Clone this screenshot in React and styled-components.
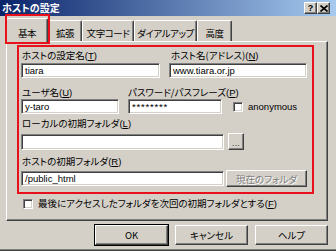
import React from "react";
import styled, { createGlobalStyle, css } from "styled-components";

const GlobalStyle = createGlobalStyle`
  html, body { margin: 0; padding: 0; background: #d4d0c8; }
  body {
    font-family: "Noto Sans CJK JP", "Liberation Sans", sans-serif;
    font-size: 9.5px;
    color: #000;
    font-feature-settings: "palt";
  }
  * { box-sizing: border-box; }
`;

const RED = "#e8101a";

const raised = css`
  border: 1px solid;
  border-color: #ffffff #404040 #404040 #ffffff;
  box-shadow: inset -1px -1px #808080;
`;

const sunken = css`
  border: 1px solid;
  border-color: #808080 #ffffff #ffffff #808080;
  box-shadow: inset 1px 1px #404040, inset -1px -1px #d4d0c8;
`;

const Window = styled.div`
  width: 336px;
  height: 251px;
  display: flex;
  flex-direction: column;
  background: #d4d0c8;
  overflow: hidden;
  border-bottom: 1px solid #404040;
  box-shadow: inset 0 -1px #808080;
`;

const TitleBar = styled.div`
  height: 16px;
  flex: none;
  display: flex;
  align-items: center;
  padding: 0 6px 0 2px;
  background: linear-gradient(to right, #0a246a, #a6caf0);
`;

const Title = styled.div`
  flex: 1;
  color: #fff;
  font-weight: bold;
  font-size: 10px;
  line-height: 12px;
  white-space: nowrap;
`;

const CaptionButton = styled.div`
  ${raised};
  width: 13px;
  height: 12px;
  background: #d4d0c8;
  display: flex;
  align-items: center;
  justify-content: center;
  font-family: "Liberation Sans", sans-serif;
  font-weight: bold;
  font-size: 9px;
  line-height: 9px;
  color: #000;
`;

const TabStrip = styled.div`
  height: 25px;
  flex: none;
  display: flex;
  align-items: flex-end;
  padding-left: 6px;
`;

const Tab = styled.div`
  position: relative;
  width: ${(p) => p.$w}px;
  height: ${(p) => (p.$active ? 24 : 21)}px;
  margin-bottom: ${(p) => (p.$active ? -1 : 0)}px;
  z-index: ${(p) => (p.$active ? 2 : 0)};
  display: flex;
  align-items: flex-end;
  justify-content: center;
  padding-bottom: ${(p) => (p.$active ? 3 : 2)}px;
  background: #d4d0c8;
  border-top: 1px solid #fff;
  border-left: 1px solid #fff;
  border-right: 1px solid #404040;
  box-shadow: inset -1px 0 #808080;
  border-radius: 2px 2px 0 0;
  font-size: 9.5px;
  letter-spacing: -0.4px;
  line-height: 12px;
  white-space: nowrap;
`;

const Highlight = styled.span`
  position: absolute;
  left: -2px;
  right: -3px;
  top: -5px;
  bottom: -2px;
  border: 2px solid ${RED};
  pointer-events: none;
`;

const Panel = styled.div`
  margin-left: 6px;
  width: 322px;
  height: 180px;
  flex: none;
  display: flex;
  flex-direction: column;
  border: 1px solid;
  border-color: #ffffff #404040 #404040 #ffffff;
  box-shadow: inset -1px -1px #808080;
  position: relative;
  z-index: 1;
`;

const RedBox = styled.div`
  margin: 3px 0 0 10px;
  width: 297px;
  height: 149px;
  border: 2px solid ${RED};
  padding: 2px 0 0 2px;
  display: flex;
  flex-direction: column;
`;

const Row = styled.div`
  display: flex;
  align-items: flex-start;
  margin-top: ${(p) => p.$mt || 0}px;
`;

const Field = styled.div`
  display: flex;
  flex-direction: column;
  width: ${(p) => p.$w}px;
  margin-left: ${(p) => p.$ml || 0}px;
`;

const Label = styled.div`
  height: 12px;
  line-height: 12px;
  font-size: 9.5px;
  white-space: nowrap;
  padding-left: ${(p) => p.$pl ?? 1}px;
`;

const AccelWrap = styled.span`
  font-family: "Liberation Sans", sans-serif;
  font-size: 9.5px;
  u {
    text-decoration: underline;
    text-underline-offset: 1px;
  }
`;

function Accel({ k }) {
  return (
    <AccelWrap>
      (<u>{k}</u>)
    </AccelWrap>
  );
}

const TextBox = styled.div`
  ${sunken};
  background: #fff;
  width: ${(p) => p.$w}px;
  height: ${(p) => p.$h || 15}px;
  margin-top: ${(p) => p.$mt || 0}px;
  padding-left: 3px;
  display: flex;
  align-items: center;
  font-family: "Liberation Sans", sans-serif;
  font-size: 9.5px;
  letter-spacing: ${(p) => (p.$secret ? "0.8px" : "0")};
  white-space: nowrap;
  overflow: hidden;
  flex: none;
`;

const Inline = styled.div`
  display: flex;
  align-items: center;
  gap: ${(p) => p.$gap}px;
  margin-top: ${(p) => p.$mt}px;
  height: 17px;
`;

const Button = styled.div`
  ${raised};
  background: #d4d0c8;
  width: ${(p) => p.$w}px;
  height: ${(p) => p.$h}px;
  flex: none;
  display: flex;
  align-items: center;
  justify-content: center;
  font-size: 9.5px;
  line-height: 12px;
  white-space: nowrap;
  color: ${(p) => (p.$disabled ? "#808080" : "#000")};
  text-shadow: ${(p) => (p.$disabled ? "1px 1px 0 #fff" : "none")};
  ${(p) =>
    p.$default &&
    css`
      outline: 1px solid #000;
      outline-offset: 0;
    `}
`;

const Dots = styled.span`
  font-family: "Liberation Sans", sans-serif;
  font-size: 8px;
  line-height: 8px;
  margin-top: 5px;
  letter-spacing: 0.5px;
`;

const Check = styled.span`
  ${sunken};
  background: #fff;
  width: 10px;
  height: 10px;
  flex: none;
`;

const CheckLabel = styled.div`
  display: flex;
  align-items: center;
  gap: 5px;
  margin-left: ${(p) => p.$ml}px;
  margin-top: ${(p) => p.$mt}px;
  font-family: ${(p) => (p.$latin ? '"Liberation Sans", sans-serif' : "inherit")};
  font-size: 9.5px;
  line-height: 12px;
  white-space: nowrap;
`;

const ButtonRow = styled.div`
  display: flex;
  justify-content: flex-end;
  gap: 7px;
  padding-right: 8px;
  margin-top: 4px;
`;

const tabs = [
  { label: "基本", w: 42, active: true },
  { label: "拡張", w: 34 },
  { label: "文字コード", w: 52 },
  { label: "ダイアルアップ", w: 63 },
  { label: "高度", w: 35 },
];

function CloseGlyph() {
  return (
    <svg width="8" height="7" viewBox="0 0 8 7">
      <path d="M0.5 0.5 L7.5 6.5 M7.5 0.5 L0.5 6.5" stroke="#000" strokeWidth="1.6" />
    </svg>
  );
}

export default function App() {
  return (
    <>
      <GlobalStyle />
      <Window>
        <TitleBar>
          <Title>ホストの設定</Title>
          <CaptionButton>?</CaptionButton>
          <CaptionButton>
            <CloseGlyph />
          </CaptionButton>
        </TitleBar>

        <TabStrip>
          {tabs.map((t) => (
            <Tab key={t.label} $w={t.w} $active={t.active}>
              {t.label}
              {t.active && <Highlight />}
            </Tab>
          ))}
        </TabStrip>

        <Panel>
          <RedBox>
            <Row>
              <Field $w={139}>
                <Label>
                  ホストの設定名<Accel k="T" />
                </Label>
                <TextBox $w={139} $mt={2}>tiara</TextBox>
              </Field>
              <Field $w={138} $ml={9}>
                <Label $pl={2}>
                  ホスト名(アドレス)<Accel k="N" />
                </Label>
                <TextBox $w={138} $mt={2}>www.tiara.or.jp</TextBox>
              </Field>
            </Row>

            <Row $mt={8}>
              <Field $w={98}>
                <Label>
                  ユーザ名<Accel k="U" />
                </Label>
                <TextBox $w={98} $mt={1}>y-taro</TextBox>
              </Field>
              <Field $w={94} $ml={9}>
                <Label $pl={0}>
                  パスワード/パスフレーズ<Accel k="P" />
                </Label>
                <TextBox $w={94} $mt={1} $secret>
                  ********
                </TextBox>
              </Field>
              <CheckLabel $ml={11} $mt={15} $latin>
                <Check />
                <span>anonymous</span>
              </CheckLabel>
            </Row>

            <Row $mt={3}>
              <Field $w={280}>
                <Label>
                  ローカルの初期フォルダ<Accel k="L" />
                </Label>
                <Inline $gap={4} $mt={4}>
                  <TextBox $w={203} $h={16} />
                  <Button $w={16} $h={17}>
                    <Dots>...</Dots>
                  </Button>
                </Inline>
              </Field>
            </Row>

            <Row $mt={5}>
              <Field $w={290}>
                <Label>
                  ホストの初期フォルダ<Accel k="R" />
                </Label>
                <Inline $gap={2} $mt={3}>
                  <TextBox $w={203} $h={15}>/public_html</TextBox>
                  <Button $w={81} $h={17} $disabled>
                    現在のフォルダ
                  </Button>
                </Inline>
              </Field>
            </Row>
          </RedBox>

          <CheckLabel $ml={16} $mt={3}>
            <Check />
            <span>
              最後にアクセスしたフォルダを次回の初期フォルダとする<Accel k="F" />
            </span>
          </CheckLabel>
        </Panel>

        <ButtonRow>
          <Button $w={73} $h={20} $default>
            OK
          </Button>
          <Button $w={73} $h={20}>
            キャンセル
          </Button>
          <Button $w={73} $h={20}>
            ヘルプ
          </Button>
        </ButtonRow>
      </Window>
    </>
  );
}
